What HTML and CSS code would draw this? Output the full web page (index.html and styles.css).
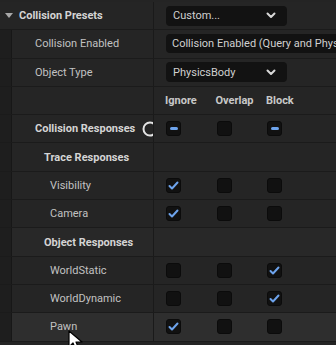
FILE: index.html
```html
<!DOCTYPE html>
<html lang="en">
<head>
    <meta charset="UTF-8">
    <meta name="viewport" content="width=device-width, initial-scale=1.0">
    <title>Collision Presets</title>
    <link rel="stylesheet" href="styles.css">
</head>
<body>
    <div class="panel">
        <div class="row top">
            <div class="label">
                <span class="arrow"></span>
                <span class="text strong">Collision Presets</span>
            </div>
            <div class="value">
                <div class="combo">
                    <span>Custom...</span>
                    <svg class="chev" width="10" height="7" viewBox="0 0 10 7"><path d="M1.5 1.5 L5 5 L8.5 1.5" fill="none" stroke="#d8d8d8" stroke-width="2" stroke-linecap="round" stroke-linejoin="round"/></svg>
                </div>
            </div>
        </div>

        <div class="row child">
            <div class="label indent-1"><span class="text">Collision Enabled</span></div>
            <div class="value">
                <div class="field">Collision Enabled (Query and Physics)</div>
            </div>
        </div>

        <div class="row child">
            <div class="label indent-1"><span class="text">Object Type</span></div>
            <div class="value">
                <div class="combo">
                    <span>PhysicsBody</span>
                    <svg class="chev" width="10" height="7" viewBox="0 0 10 7"><path d="M1.5 1.5 L5 5 L8.5 1.5" fill="none" stroke="#d8d8d8" stroke-width="2" stroke-linecap="round" stroke-linejoin="round"/></svg>
                </div>
            </div>
        </div>

        <div class="row child">
            <div class="label indent-1"></div>
            <div class="value cols">
                <span class="head">Ignore</span>
                <span class="head">Overlap</span>
                <span class="head">Block</span>
            </div>
        </div>

        <div class="row child">
            <div class="label indent-1">
                <span class="text strong">Collision Responses</span>
                <svg class="ring" width="18" height="18" viewBox="0 0 18 18"><circle cx="9" cy="9" r="6.5" fill="none" stroke="#e4e4e4" stroke-width="2"/></svg>
            </div>
            <div class="value cols">
                <span class="box"><span class="minus"></span></span>
                <span class="box"></span>
                <span class="box"><span class="minus"></span></span>
            </div>
        </div>

        <div class="row child">
            <div class="label indent-2"><span class="text strong">Trace Responses</span></div>
            <div class="value"></div>
        </div>

        <div class="row child">
            <div class="label indent-3"><span class="text">Visibility</span></div>
            <div class="value cols">
                <span class="box on"></span>
                <span class="box"></span>
                <span class="box"></span>
            </div>
        </div>

        <div class="row child">
            <div class="label indent-3"><span class="text">Camera</span></div>
            <div class="value cols">
                <span class="box on"></span>
                <span class="box"></span>
                <span class="box"></span>
            </div>
        </div>

        <div class="row child section">
            <div class="label indent-2"><span class="text strong">Object Responses</span></div>
            <div class="value"></div>
        </div>

        <div class="row child">
            <div class="label indent-3"><span class="text">WorldStatic</span></div>
            <div class="value cols">
                <span class="box"></span>
                <span class="box"></span>
                <span class="box on"></span>
            </div>
        </div>

        <div class="row child">
            <div class="label indent-3"><span class="text">WorldDynamic</span></div>
            <div class="value cols">
                <span class="box"></span>
                <span class="box"></span>
                <span class="box on"></span>
            </div>
        </div>

        <div class="row child hover">
            <div class="label indent-3"><span class="text">Pawn</span></div>
            <div class="value cols">
                <span class="box on"></span>
                <span class="box"></span>
                <span class="box"></span>
            </div>
        </div>
    </div>

    <svg class="cursor" width="16" height="22" viewBox="0 0 16 22"><path d="M1 1 L1 17 L5 13 L8 20 L11 19 L8 12 L14 12 Z" fill="#ffffff" stroke="#000000" stroke-width="1.2" stroke-linejoin="round"/></svg>
</body>
</html>
```

FILE: styles.css
```css
body {
    margin: 0;
    padding-top: 2px;
    background-color: #242424;
    font-family: Roboto, "Liberation Sans", sans-serif;
    font-size: 11px;
    color: #c4c4c4;
    overflow: hidden;
    position: relative;
    height: 345px;
}
.panel {
    width: 336px;
}
.row {
    display: grid;
    grid-template-columns: 153px 1px 1fr;
    height: 28.3px;
    box-sizing: border-box;
    border-bottom: 1px solid #1b1b1b;
    background-color: #252525;
}
.row::before {
    content: "";
    grid-column: 2;
    grid-row: 1;
    background-color: #1a1a1a;
}
.row.hover {
    background-color: #2e2e2e;
}
.row.section {
    background-color: #282828;
}
.label {
    grid-column: 1;
    grid-row: 1;
    display: flex;
    align-items: center;
    overflow: hidden;
    white-space: nowrap;
    position: relative;
}
.value {
    grid-column: 3;
    grid-row: 1;
    display: flex;
    align-items: center;
    padding-left: 12px;
    overflow: hidden;
    white-space: nowrap;
}
.top .label {
    padding-left: 5px;
}
.arrow {
    width: 0;
    height: 0;
    border-left: 4px solid transparent;
    border-right: 4px solid transparent;
    border-top: 5px solid #a8a8a8;
    margin-right: 6px;
}
.child .label {
    background-image: linear-gradient(#1e1e1e, #1e1e1e), linear-gradient(#171717, #171717);
    background-size: 11px 100%, 1px 100%;
    background-position: 0 0, 11px 0;
    background-repeat: no-repeat;
}
.indent-1 { padding-left: 35px; }
.indent-2 { padding-left: 44px; }
.indent-3 { padding-left: 50px; }
.text {
    color: #c2c2c2;
}
.strong {
    font-weight: bold;
    color: #d4d4d4;
}
.ring {
    margin-left: 6px;
    flex-shrink: 0;
}
.combo {
    width: 121px;
    height: 20px;
    box-sizing: border-box;
    background-color: #121212;
    border-radius: 4px;
    display: flex;
    align-items: center;
    justify-content: space-between;
    padding: 0 11px 0 7px;
    color: #d0d0d0;
}
.field {
    height: 19px;
    flex: 1;
    background-color: #121212;
    border-radius: 4px 0 0 4px;
    display: flex;
    align-items: center;
    padding-left: 6px;
    color: #d0d0d0;
}
.cols {
    display: grid;
    grid-template-columns: 50.5px 50.5px 50.5px;
    align-items: center;
}
.head {
    font-weight: bold;
    color: #c8c8c8;
    margin-left: -1px;
}
.box {
    width: 15px;
    height: 15px;
    box-sizing: border-box;
    background-color: #111111;
    border: 1px solid #0b0b0b;
    border-radius: 3px;
    display: flex;
    align-items: center;
    justify-content: center;
}
.box.on {
    background-image: url("data:image/svg+xml,%3Csvg xmlns='http://www.w3.org/2000/svg' width='13' height='13' viewBox='0 0 13 13'%3E%3Cpath d='M2.5 7 L5 9.5 L10.5 3.5' fill='none' stroke='%236da3ec' stroke-width='2' stroke-linecap='round' stroke-linejoin='round'/%3E%3C/svg%3E");
    background-repeat: no-repeat;
    background-position: center;
}
.minus {
    width: 8px;
    height: 3px;
    border-radius: 2px;
    background-color: #6da3ec;
}
.cursor {
    position: absolute;
    left: 68px;
    top: 330px;
}
```
